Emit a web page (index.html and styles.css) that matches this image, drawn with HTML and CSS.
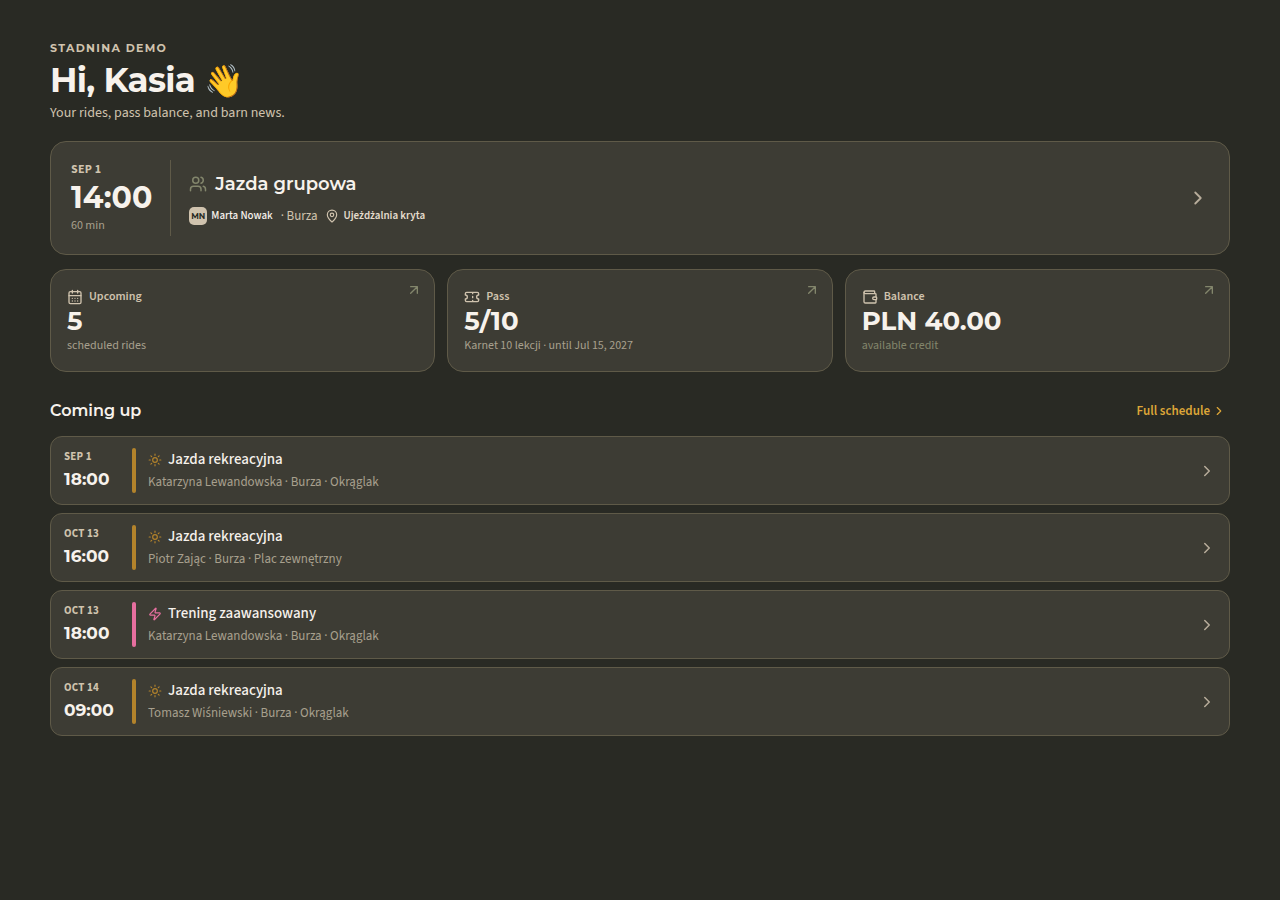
FILE: index.html
```html
<!DOCTYPE html>
<html lang="en">
<head>
    <meta charset="UTF-8">
    <meta name="viewport" content="width=device-width, initial-scale=1.0">
    <title>Stadnina Demo</title>
    <link rel="stylesheet" href="styles.css">
</head>
<body>

    <!-- shared icons -->
    <svg class="sprite" aria-hidden="true">
        <symbol id="chevron" viewBox="0 0 24 24"><path d="m9 18 6-6-6-6"/></symbol>
        <symbol id="arrow" viewBox="0 0 24 24"><path d="M7 7h10v10M7 17 17 7"/></symbol>
        <symbol id="sun" viewBox="0 0 24 24"><circle cx="12" cy="12" r="4"/><path d="M12 2v2M12 20v2M4.93 4.93l1.41 1.41M17.66 17.66l1.41 1.41M2 12h2M20 12h2M6.34 17.66l-1.41 1.41M19.07 4.93l-1.41 1.41"/></symbol>
        <symbol id="zap" viewBox="0 0 24 24"><path d="M4 14a1 1 0 0 1-.78-1.63l9.9-10.2a.5.5 0 0 1 .86.46l-1.92 6.02A1 1 0 0 0 13 10h7a1 1 0 0 1 .78 1.63l-9.9 10.2a.5.5 0 0 1-.86-.46l1.92-6.02A1 1 0 0 0 11 14z"/></symbol>
        <symbol id="users" viewBox="0 0 24 24"><path d="M16 21v-2a4 4 0 0 0-4-4H6a4 4 0 0 0-4 4v2"/><circle cx="9" cy="7" r="4"/><path d="M22 21v-2a4 4 0 0 0-3-3.87M16 3.13a4 4 0 0 1 0 7.75"/></symbol>
        <symbol id="pin" viewBox="0 0 24 24"><path d="M20 10c0 4.99-5.54 10.19-7.4 11.8a1 1 0 0 1-1.2 0C9.54 20.19 4 14.99 4 10a8 8 0 0 1 16 0"/><circle cx="12" cy="10" r="3"/></symbol>
        <symbol id="calendar" viewBox="0 0 24 24"><path d="M8 2v4M16 2v4M3 10h18"/><rect x="3" y="4" width="18" height="18" rx="2"/><path d="M8 14h.01M12 14h.01M16 14h.01M8 18h.01M12 18h.01M16 18h.01"/></symbol>
        <symbol id="ticket" viewBox="0 0 24 24"><path d="M2 9a3 3 0 0 1 0 6v2a2 2 0 0 0 2 2h16a2 2 0 0 0 2-2v-2a3 3 0 0 1 0-6V7a2 2 0 0 0-2-2H4a2 2 0 0 0-2 2ZM13 5v2M13 17v2M13 11v2"/></symbol>
        <symbol id="wallet" viewBox="0 0 24 24"><path d="M19 7V4a1 1 0 0 0-1-1H5a2 2 0 0 0 0 4h15a1 1 0 0 1 1 1v4h-3a2 2 0 0 0 0 4h3a1 1 0 0 0 1-1v-2a1 1 0 0 0-1-1"/><path d="M3 5v14a2 2 0 0 0 2 2h15a1 1 0 0 0 1-1v-4"/></symbol>
    </svg>

    <main class="page">
        <header class="intro">
            <p class="eyebrow">Stadnina Demo</p>
            <h1>Hi, Kasia <span class="wave">👋</span></h1>
            <p class="lead">Your rides, pass balance, and barn news.</p>
        </header>

        <a class="next-ride" href="#ride">
            <div class="next-time">
                <span class="next-date">SEP 1</span>
                <span class="next-hour">14:00</span>
                <span class="next-length">60 min</span>
            </div>
            <div class="next-info">
                <h2 class="next-title"><svg class="icon icon-lg"><use href="#users"/></svg>Jazda grupowa</h2>
                <div class="next-meta">
                    <span class="avatar">MN</span>
                    <span class="trainer">Marta Nowak</span>
                    <span class="horse">· Burza</span>
                    <svg class="icon icon-sm"><use href="#pin"/></svg>
                    <span class="place">Ujeżdżalnia kryta</span>
                </div>
            </div>
            <svg class="icon icon-xl go"><use href="#chevron"/></svg>
        </a>

        <section class="stats">
            <a class="stat" href="#upcoming">
                <span class="stat-label"><svg class="icon"><use href="#calendar"/></svg>Upcoming</span>
                <span class="stat-value">5</span>
                <span class="stat-note">scheduled rides</span>
                <svg class="icon corner"><use href="#arrow"/></svg>
            </a>
            <a class="stat" href="#pass">
                <span class="stat-label"><svg class="icon"><use href="#ticket"/></svg>Pass</span>
                <span class="stat-value">5/10</span>
                <span class="stat-note">Karnet 10 lekcji · until Jul 15, 2027</span>
                <svg class="icon corner"><use href="#arrow"/></svg>
            </a>
            <a class="stat" href="#balance">
                <span class="stat-label"><svg class="icon"><use href="#wallet"/></svg>Balance</span>
                <span class="stat-value">PLN 40.00</span>
                <span class="stat-note dim">available credit</span>
                <svg class="icon corner"><use href="#arrow"/></svg>
            </a>
        </section>

        <section class="coming">
            <div class="coming-head">
                <h2>Coming up</h2>
                <a class="full-link" href="#schedule">Full schedule<svg class="icon icon-sm"><use href="#chevron"/></svg></a>
            </div>

            <a class="ride" href="#ride-1">
                <div class="ride-time"><span class="ride-date">SEP 1</span><span class="ride-hour">18:00</span></div>
                <span class="bar"></span>
                <div class="ride-info">
                    <h3><svg class="icon icon-sm"><use href="#sun"/></svg>Jazda rekreacyjna</h3>
                    <p>Katarzyna Lewandowska · Burza · Okrąglak</p>
                </div>
                <svg class="icon icon-lg go"><use href="#chevron"/></svg>
            </a>
            <a class="ride" href="#ride-2">
                <div class="ride-time"><span class="ride-date">OCT 13</span><span class="ride-hour">16:00</span></div>
                <span class="bar"></span>
                <div class="ride-info">
                    <h3><svg class="icon icon-sm"><use href="#sun"/></svg>Jazda rekreacyjna</h3>
                    <p>Piotr Zając · Burza · Plac zewnętrzny</p>
                </div>
                <svg class="icon icon-lg go"><use href="#chevron"/></svg>
            </a>
            <a class="ride advanced" href="#ride-3">
                <div class="ride-time"><span class="ride-date">OCT 13</span><span class="ride-hour">18:00</span></div>
                <span class="bar"></span>
                <div class="ride-info">
                    <h3><svg class="icon icon-sm"><use href="#zap"/></svg>Trening zaawansowany</h3>
                    <p>Katarzyna Lewandowska · Burza · Okrąglak</p>
                </div>
                <svg class="icon icon-lg go"><use href="#chevron"/></svg>
            </a>
            <a class="ride" href="#ride-4">
                <div class="ride-time"><span class="ride-date">OCT 14</span><span class="ride-hour">09:00</span></div>
                <span class="bar"></span>
                <div class="ride-info">
                    <h3><svg class="icon icon-sm"><use href="#sun"/></svg>Jazda rekreacyjna</h3>
                    <p>Tomasz Wiśniewski · Burza · Okrąglak</p>
                </div>
                <svg class="icon icon-lg go"><use href="#chevron"/></svg>
            </a>
        </section>
    </main>

</body>
</html>
```
FILE: styles.css
```css
:root {
    --bg: #292a24;
    --card: #3d3c34;
    --line: #5f5a48;
    --text: #f7f2ec;
    --tan: #d0c3ae;
    --muted: #a8a08e;
    --sage: #83866c;
    --gold: #b3832b;
    --head: Montserrat, Inter, sans-serif;
    --body: "Source Sans 3", "Noto Sans CJK SC", "Noto Sans", sans-serif;
}
* {
    margin: 0;
    padding: 0;
    box-sizing: border-box;
}
body {
    background: var(--bg);
    color: var(--text);
    font-family: var(--body);
    font-size: 12px;
}
a {
    color: inherit;
    text-decoration: none;
}
.sprite {
    display: none;
}
.icon {
    width: 16px;
    height: 16px;
    flex: none;
    fill: none;
    stroke: currentColor;
    stroke-width: 2;
    stroke-linecap: round;
    stroke-linejoin: round;
}
.icon-sm {
    width: 14px;
    height: 14px;
}
.icon-lg {
    width: 18px;
    height: 18px;
}
.icon-xl {
    width: 22px;
    height: 22px;
}
.go {
    color: #b8ad9b;
}
.page {
    padding: 40px 50px;
}

/* greeting */
.intro {
    margin-bottom: 19px;
}
.eyebrow {
    font-family: var(--head);
    font-size: 11px;
    line-height: 16px;
    font-weight: 700;
    letter-spacing: 0.12em;
    text-transform: uppercase;
    color: var(--tan);
}
h1 {
    font-family: var(--head);
    font-size: 34px;
    line-height: 48px;
    font-weight: 700;
    letter-spacing: -0.02em;
}
.wave {
    font-size: 32px;
    line-height: 1;
}
.lead {
    font-size: 14px;
    line-height: 18px;
    color: var(--tan);
}

/* next ride */
.next-ride {
    display: flex;
    align-items: center;
    gap: 18px;
    padding: 18px 20px;
    margin-bottom: 14px;
    background: var(--card);
    border: 1px solid var(--line);
    border-radius: 16px;
    color: var(--tan);
}
.next-time {
    display: flex;
    flex-direction: column;
    padding-right: 18px;
    border-right: 1px solid var(--line);
}
.next-date {
    font-size: 12px;
    line-height: 20px;
    font-weight: 700;
    letter-spacing: 0.02em;
}
.next-hour {
    font-family: var(--head);
    font-size: 30px;
    line-height: 36px;
    font-weight: 700;
    color: var(--text);
}
.next-length {
    line-height: 20px;
    color: var(--muted);
}
.next-info {
    flex: 1;
    padding-top: 2px;
}
.next-title {
    display: flex;
    align-items: center;
    gap: 8px;
    margin-bottom: 10px;
    font-family: var(--head);
    font-size: 18px;
    line-height: 24px;
    font-weight: 600;
    color: var(--text);
}
.next-title .icon {
    color: var(--sage);
}
.next-meta {
    display: flex;
    align-items: center;
    gap: 4px;
    line-height: 20px;
}
.avatar {
    width: 18px;
    border-radius: 5px;
    background: var(--tan);
    color: var(--bg);
    font-family: var(--head);
    font-size: 8px;
    line-height: 18px;
    font-weight: 700;
    text-align: center;
}
.trainer, .place {
    font-size: 11px;
    font-weight: 500;
    color: var(--text);
}
.place {
    font-weight: 600;
    color: #e5dccd;
}
.horse {
    margin: 0 4px;
    font-size: 13px;
}

/* stat cards */
.stats {
    display: grid;
    grid-template-columns: repeat(3, 1fr);
    gap: 12px;
    margin-bottom: 26px;
}
.stat {
    position: relative;
    display: flex;
    flex-direction: column;
    padding: 17px 16px 15px;
    background: var(--card);
    border: 1px solid var(--line);
    border-radius: 16px;
}
.stat-label {
    display: flex;
    align-items: center;
    gap: 6px;
    font-size: 12px;
    line-height: 20px;
    font-weight: 600;
    color: var(--tan);
}
.stat-value {
    font-family: var(--head);
    font-size: 26px;
    line-height: 29px;
    font-weight: 700;
}
.stat-note {
    font-size: 12px;
    line-height: 20px;
    color: var(--muted);
}
.dim, .corner {
    color: var(--sage);
}
.corner {
    position: absolute;
    top: 12px;
    right: 12px;
}

/* upcoming list */
.coming {
    display: grid;
    gap: 8px;
}
.coming-head {
    display: flex;
    align-items: center;
    justify-content: space-between;
    padding: 0 4px 5px 0;
}
.coming-head h2 {
    font-family: var(--head);
    font-size: 16px;
    line-height: 25px;
    font-weight: 600;
}
.full-link {
    display: flex;
    align-items: center;
    gap: 2px;
    font-size: 13px;
    line-height: 20px;
    font-weight: 600;
    color: #dda638;
}
.ride {
    display: flex;
    align-items: center;
    gap: 12px;
    padding: 11px 13px;
    background: var(--card);
    border: 1px solid var(--line);
    border-radius: 12px;
    color: var(--tan);
}
.ride-time {
    display: flex;
    flex-direction: column;
    width: 56px;
}
.ride-date {
    font-size: 11px;
    line-height: 16px;
    font-weight: 700;
    letter-spacing: 0.02em;
}
.ride-hour {
    font-family: var(--head);
    font-size: 17px;
    line-height: 28px;
    font-weight: 700;
    color: var(--text);
}
.bar {
    align-self: stretch;
    width: 4px;
    border-radius: 2px;
    background: var(--gold);
}
.ride-info {
    flex: 1;
}
.ride-info h3 {
    display: flex;
    align-items: center;
    gap: 6px;
    font-size: 15px;
    line-height: 24px;
    font-weight: 500;
    color: var(--text);
}
.ride-info h3 .icon {
    color: var(--gold);
}
.ride-info p {
    font-size: 13px;
    line-height: 21px;
    color: var(--muted);
}
.advanced .bar {
    background: #e66f9f;
}
.advanced h3 .icon {
    color: #e66f9f;
}
```
